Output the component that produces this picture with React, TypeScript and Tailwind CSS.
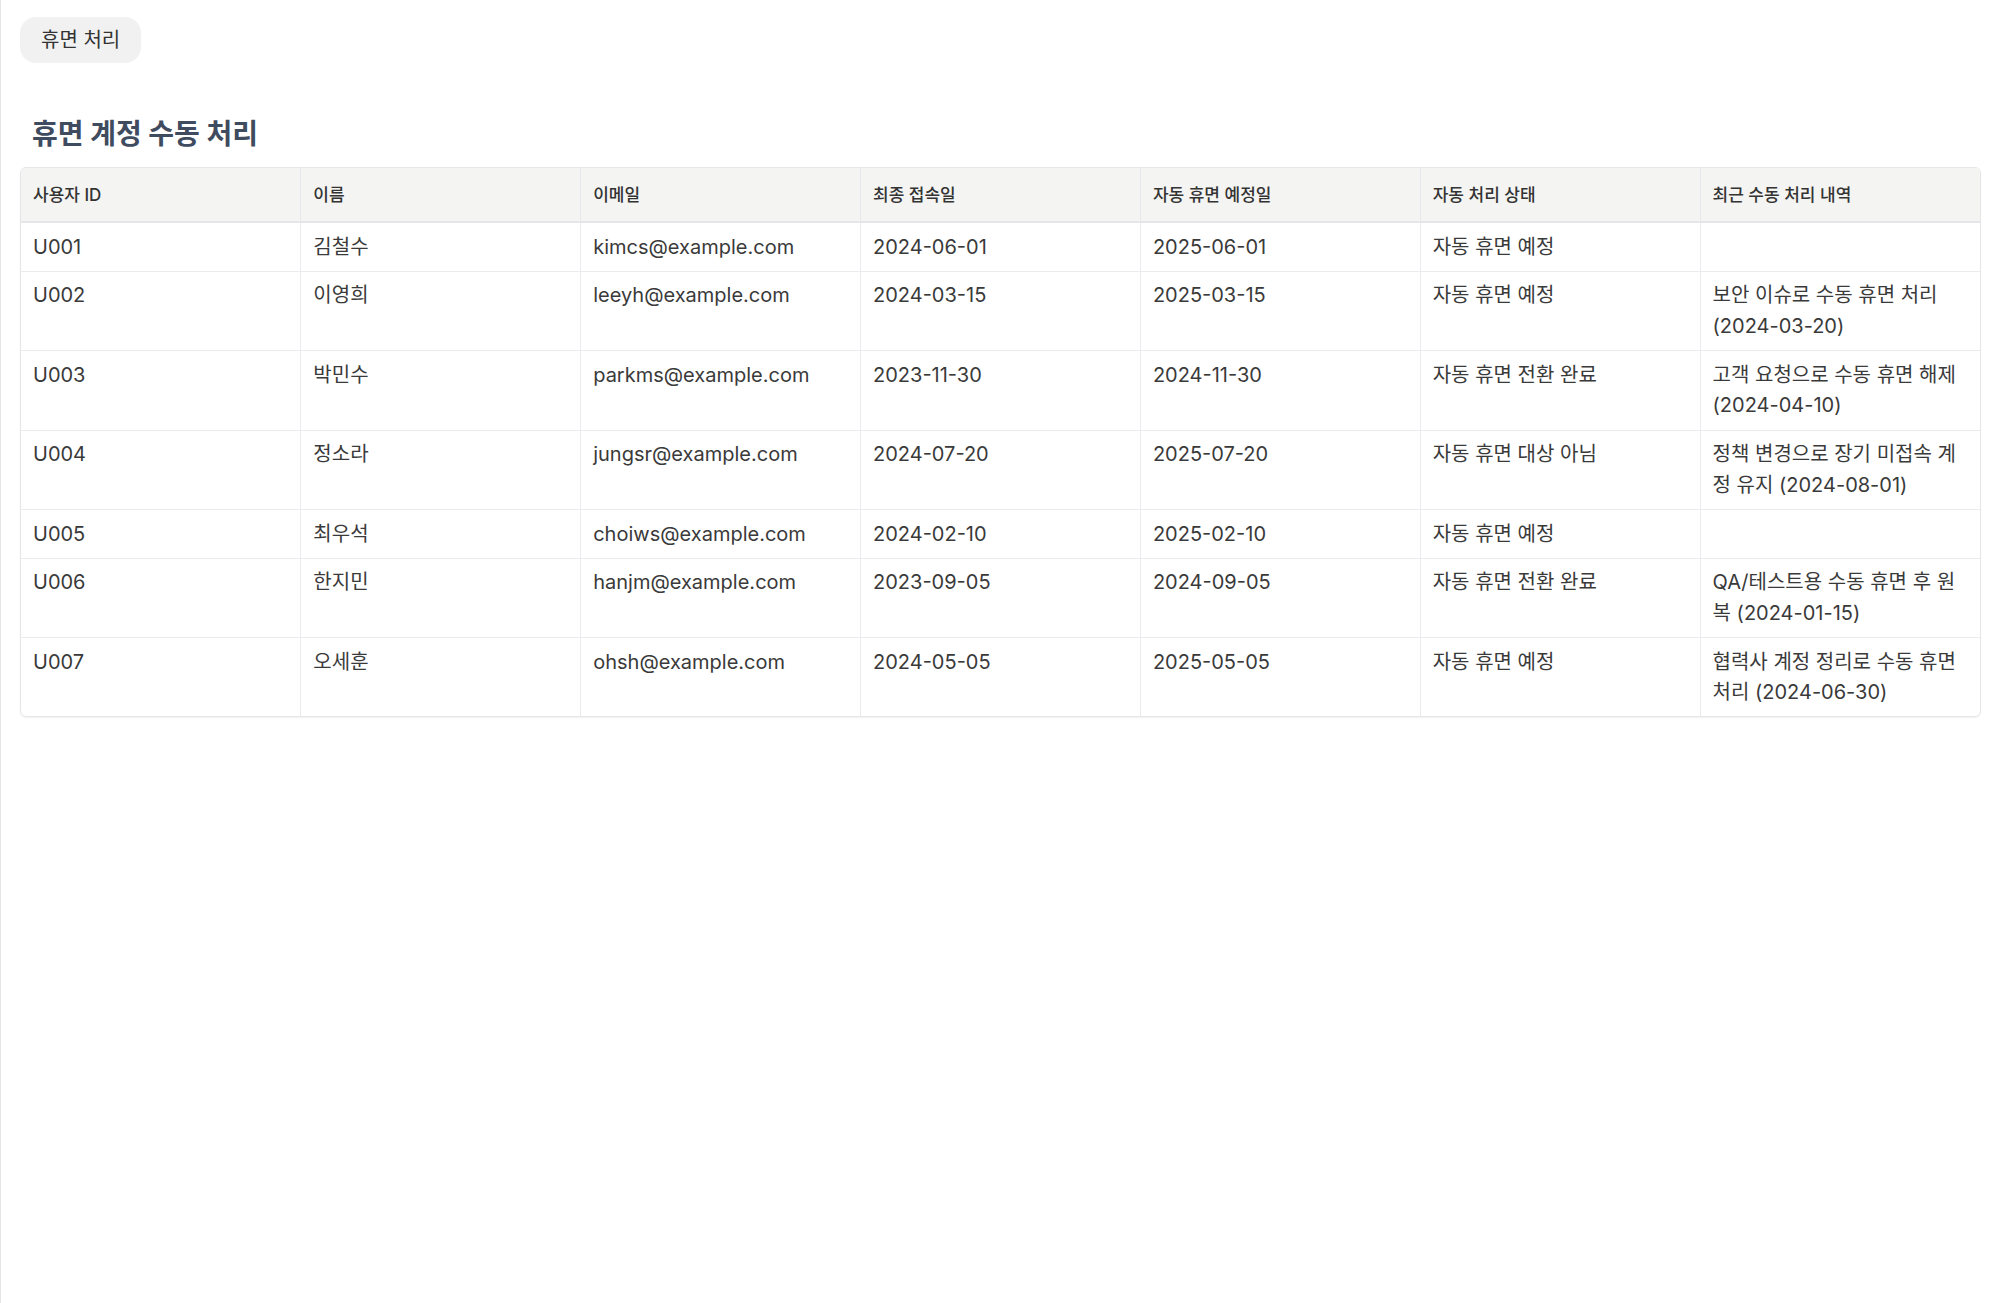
import React from "react";

const rows = [
  ["U001", "김철수", "kimcs@example.com", "2024-06-01", "2025-06-01", "자동 휴면 예정", ""],
  ["U002", "이영희", "leeyh@example.com", "2024-03-15", "2025-03-15", "자동 휴면 예정", "보안 이슈로 수동 휴면 처리 (2024-03-20)"],
  ["U003", "박민수", "parkms@example.com", "2023-11-30", "2024-11-30", "자동 휴면 전환 완료", "고객 요청으로 수동 휴면 해제 (2024-04-10)"],
  ["U004", "정소라", "jungsr@example.com", "2024-07-20", "2025-07-20", "자동 휴면 대상 아님", "정책 변경으로 장기 미접속 계정 유지 (2024-08-01)"],
  ["U005", "최우석", "choiws@example.com", "2024-02-10", "2025-02-10", "자동 휴면 예정", ""],
  ["U006", "한지민", "hanjm@example.com", "2023-09-05", "2024-09-05", "자동 휴면 전환 완료", "QA/테스트용 수동 휴면 후 원복 (2024-01-15)"],
  ["U007", "오세훈", "ohsh@example.com", "2024-05-05", "2025-05-05", "자동 휴면 예정", "협력사 계정 정리로 수동 휴면 처리 (2024-06-30)"],
];

const headers = ["사용자 ID", "이름", "이메일", "최종 접속일", "자동 휴면 예정일", "자동 처리 상태", "최근 수동 처리 내역"];

export default function App() {
  return (
    <div
      className="min-h-[1303px] w-full bg-white border-l border-[#e4e4e8] px-[19px] pt-[17px] text-[#3a3a3a]"
      style={{ fontFamily: 'Inter, "Noto Sans CJK KR", sans-serif' }}
    >
      <button className="h-[46px] px-[21px] rounded-[16px] bg-[#f1f1f1] text-[20px] text-[#333333] leading-none">
        휴면 처리
      </button>
      <h2 className="mt-[52px] mb-[14px] text-[28px] leading-[38px] font-bold text-[#3f4b5e] pl-[12px]">
        휴면 계정 수동 처리
      </h2>
      <div className="rounded-[6px] border border-[#e6e6e8] overflow-hidden shadow-[0_1px_2px_rgba(0,0,0,0.06)]">
        <table className="w-full table-fixed border-collapse">
          <thead>
            <tr className="bg-[#f4f4f2] border-b-2 border-[#e6e6ea]">
              {headers.map((h, i) => (
                <th
                  key={i}
                  className={`text-left font-medium text-[17px] leading-[26px] px-[12px] py-[13.5px] text-[#333333] ${i > 0 ? "border-l border-[#e8e8ec]" : ""}`}
                >
                  {h}
                </th>
              ))}
            </tr>
          </thead>
          <tbody>
            {rows.map((r, ri) => (
              <tr key={ri} className={ri > 0 ? "border-t border-[#ececf0]" : ""}>
                {r.map((c, ci) => (
                  <td
                    key={ci}
                    className={`align-top text-[20px] leading-[30.6px] px-[12px] py-[8.6px] text-[#3a3a3a] ${ci > 0 ? "border-l border-[#ececf0]" : ""}`}
                  >
                    {c}
                  </td>
                ))}
              </tr>
            ))}
          </tbody>
        </table>
      </div>
    </div>
  );
}
